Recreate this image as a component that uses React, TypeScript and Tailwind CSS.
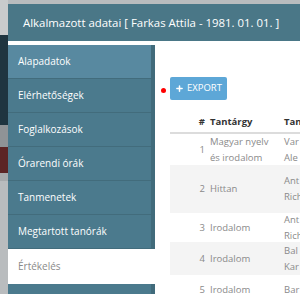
import { Plus } from 'lucide-react';

const menu = [
  'Alapadatok',
  'Elérhetőségek',
  'Foglalkozások',
  'Órarendi órák',
  'Tanmenetek',
  'Megtartott tanórák',
];

const rows = [
  { n: 1, subject: ['Magyar nyelv', 'és irodalom'], teacher: ['Var', 'Ale'], h: 'h-[31px]' },
  { n: 2, subject: ['Hittan'], teacher: ['Ant', 'Rich'], h: 'h-[48px]' },
  { n: 3, subject: ['Irodalom'], teacher: ['Ant', 'Rich'], h: 'h-[29px]' },
  { n: 4, subject: ['Irodalom'], teacher: ['Bal', 'Kar'], h: 'h-[33px]' },
  { n: 5, subject: ['Irodalom'], teacher: ['Bar', ''], h: 'h-[30px]' },
];

// Page strip left of the modal
const Backdrop = () => (
  <div className="flex w-[8px] shrink-0 flex-col">
    <div className="h-[35px] bg-[#c9cbcc]" />
    <div className="h-[90px] bg-[#1f3540]" />
    <div className="h-[22px] bg-[#8f9396]" />
    <div className="h-[26px] bg-[#5c2525]" />
    <div className="h-[8px] bg-[#a7aaac]" />
    <div className="flex-1 bg-[#b9bcbe]" />
  </div>
);

export default function App() {
  return (
    <div
      className="flex h-[294px] w-[300px] overflow-hidden bg-[#b9bcbe]"
      style={{ fontFamily: '"Open Sans", "Liberation Sans", sans-serif' }}
    >
      <Backdrop />
      <div className="flex min-w-0 flex-1 flex-col pt-[4px]">
        <div className="flex h-[37px] shrink-0 items-center bg-[#4a7787] pl-[15px] text-[11.4px] whitespace-nowrap text-white">
          Alkalmazott adatai [ Farkas Attila - 1981. 01. 01. ]
        </div>
        <div className="flex flex-1 bg-white pt-[4px]">
          <div className="flex w-[147px] shrink-0 flex-col">
            {menu.map((m, i) => (
              <div
                key={m}
                className={`flex h-[34px] items-center border-b border-[#426c7c] pl-[10px] text-[10px] text-white border-r-[4px] border-r-[#416b7b] ${
                  i === 0 ? 'bg-[#5889a0]' : 'bg-[#4b7a8d]'
                }`}
              >
                {m}
              </div>
            ))}
            <div className="flex h-[35px] items-center bg-white pl-[10px] text-[10px] text-[#8a8a8a]">
              Értékelés
            </div>
            <div className="flex-1 border-r-[4px] border-r-[#416b7b] bg-[#4b7a8d]" />
          </div>
          <div className="min-w-0 flex-1 overflow-hidden pl-[15px] pt-[32px]">
            <div className="relative">
              <span className="absolute left-[-9px] top-[11px] h-[5px] w-[5px] rounded-full bg-[#ff0000]" />
              <button className="flex h-[23px] items-center gap-[3px] rounded-[2px] bg-[#5da7d7] px-[5px] text-[9.5px] text-white">
                <Plus size={9} strokeWidth={4} />
                EXPORT
              </button>
            </div>
            <table className="mt-[11px] w-[200px] table-fixed border-collapse text-[9.5px] leading-[16px] text-[#8a8a8a]">
              <colgroup>
                <col className="w-[37px]" />
                <col className="w-[74px]" />
                <col />
              </colgroup>
              <thead>
                <tr className="h-[22px] border-b-2 border-[#dcdcdc] text-[#333] font-bold">
                  <th className="pr-[2px] text-right">#</th>
                  <th className="pl-[3px] text-left">Tantárgy</th>
                  <th className="pl-[3px] text-left whitespace-nowrap">Tantárgy</th>
                </tr>
              </thead>
              <tbody>
                {rows.map((r) => (
                  <tr key={r.n} className={r.n % 2 === 0 ? 'bg-[#f4f4f4]' : 'bg-white'}>
                    <td className="p-0 pr-[2px] text-right">
                      <div className={`flex flex-col justify-center ${r.h}`}>{r.n}</div>
                    </td>
                    <td className="p-0 pl-[3px]">
                      <div className={`flex flex-col justify-center whitespace-nowrap ${r.h}`}>
                        {r.subject.map((s) => (
                          <div key={s}>{s}</div>
                        ))}
                      </div>
                    </td>
                    <td className="p-0 pl-[3px]">
                      <div className={`flex flex-col justify-center whitespace-nowrap ${r.h}`}>
                        {r.teacher.map((t, i) => (
                          <div key={i}>{t}</div>
                        ))}
                      </div>
                    </td>
                  </tr>
                ))}
              </tbody>
            </table>
          </div>
        </div>
      </div>
    </div>
  );
}
